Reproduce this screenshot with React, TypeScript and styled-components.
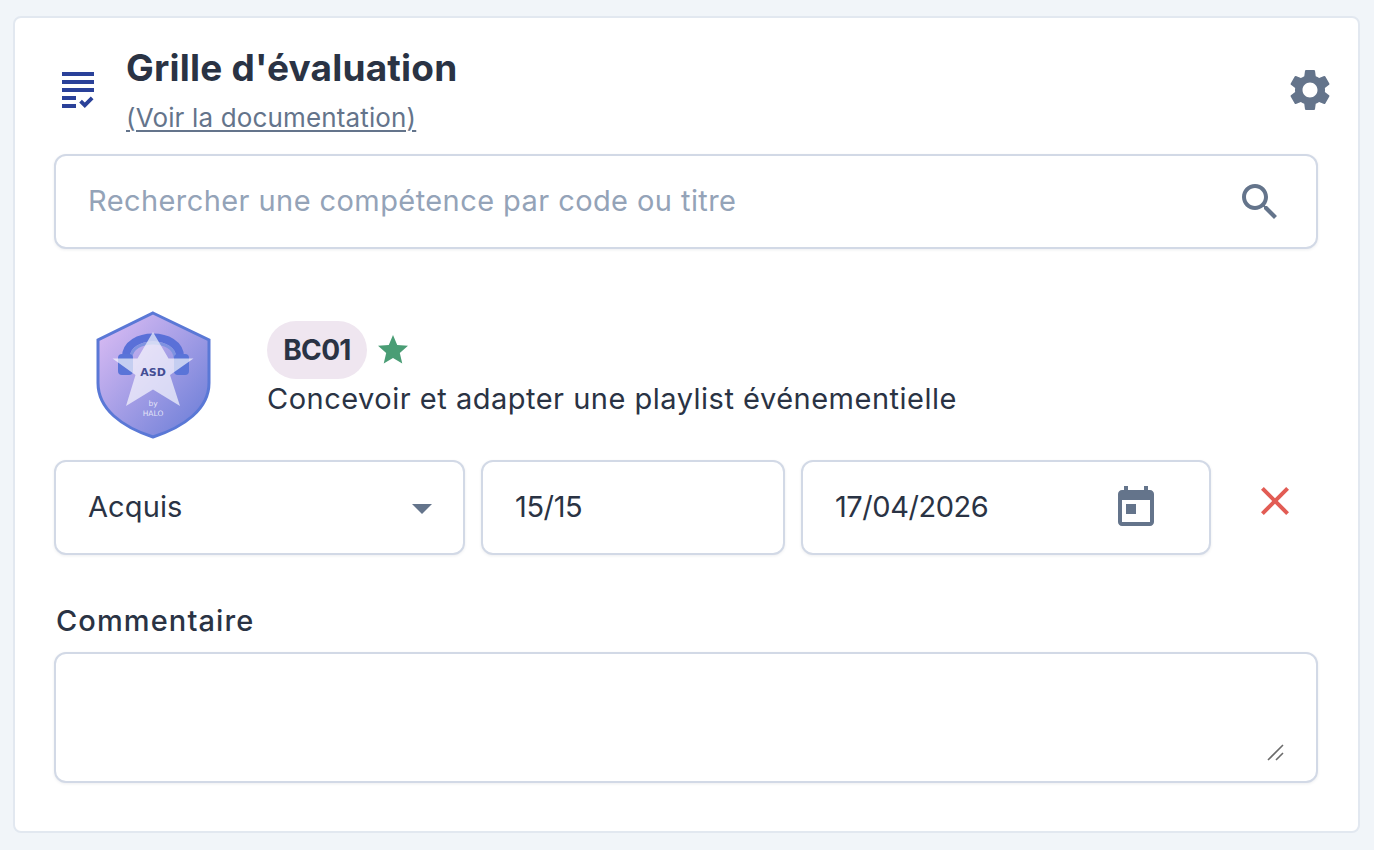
import React from "react";
import styled, { createGlobalStyle } from "styled-components";

const Global = createGlobalStyle`
  html, body { margin: 0; padding: 0; background: #f1f5f9; }
  body { font-family: Inter, "Noto Sans", sans-serif; color: #2a3344; }
  * { box-sizing: border-box; }
`;

const Page = styled.div`
  width: 1374px;
  height: 850px;
  padding: 16px 14px 17px 13px;
  overflow: hidden;
`;

const Card = styled.section`
  height: 817px;
  background: #fff;
  border: 2px solid #e2e8f0;
  border-radius: 8px;
  padding: 0 40px 48px 39px;
`;

const Header = styled.header`
  display: flex;
  align-items: flex-start;
  margin-right: -16px;
  padding: 28px 0 18px 8px;
  height: 136px;
`;

const ListIcon = styled.svg`
  width: 32px;
  height: 36px;
  margin-top: 26px;
  margin-right: 32px;
  flex: none;
`;

const Titles = styled.div`
  flex: 1;
`;

const Title = styled.h1`
  margin: 0;
  font-size: 37px;
  line-height: 44px;
  font-weight: 700;
  letter-spacing: 0.2px;
  color: #2a3344;
`;

const DocLink = styled.a`
  display: inline-block;
  margin-top: 9px;
  font-size: 26px;
  line-height: 38px;
  color: #64748b;
  letter-spacing: 0.15px;
  text-decoration: underline;
  text-underline-offset: 3px;
  text-decoration-thickness: 1.5px;
`;

const GearIcon = styled.svg`
  width: 50px;
  height: 50px;
  margin-top: 19px;
  margin-right: -1px;
  fill: #64748b;
  flex: none;
`;

const fieldStyles = `
  background: #fff;
  border: 2px solid #d2d9e6;
  border-radius: 12px;
  box-shadow: 0 1px 3px rgba(30, 41, 59, 0.08);
`;

const Field = styled.div`
  ${fieldStyles}
  height: 95px;
  display: flex;
  align-items: center;
  padding: 0 32px;
  position: relative;
`;

const FieldInput = styled.input<{ $spacing?: number }>`
  flex: 1;
  min-width: 0;
  border: 0;
  outline: 0;
  padding: 0 0 2px;
  background: transparent;
  font: 400 29px/40px Inter, sans-serif;
  letter-spacing: ${(p) => p.$spacing ?? 0.42}px;
  color: #2a3344;
  &::placeholder {
    color: #94a3b8;
    opacity: 1;
  }
`;

const FieldIcon = styled.svg<{ $right?: number; $top?: number }>`
  width: 48px;
  height: 48px;
  fill: #64748b;
  flex: none;
  margin-right: ${(p) => p.$right ?? 0}px;
  margin-top: ${(p) => p.$top ?? 0}px;
`;

const Skill = styled.div`
  display: flex;
  align-items: flex-start;
  gap: 56px;
  margin-top: 62px;
  padding-left: 42px;
  height: 128px;
`;

const Shield = styled.svg`
  width: 115px;
  height: 128px;
  flex: none;
`;

const SkillText = styled.div`
  padding-top: 10px;
`;

const BadgeLine = styled.div`
  display: flex;
  align-items: center;
  gap: 8px;
`;

const Badge = styled.span`
  height: 58px;
  width: 100px;
  border-radius: 29px;
  background: #efe6f0;
  display: flex;
  align-items: center;
  justify-content: center;
  font-size: 28px;
  font-weight: 700;
  letter-spacing: -0.7px;
  color: #2a3344;
`;

const StarIcon = styled.svg`
  width: 36px;
  height: 36px;
  fill: #4a9d75;
`;

const SkillName = styled.div`
  font-size: 29px;
  line-height: 40px;
  letter-spacing: 0.5px;
`;

const Controls = styled.div`
  display: grid;
  grid-template-columns: 411px 304px 410px 1fr;
  gap: 16px;
  margin-top: 21px;
`;

const DeleteButton = styled.button`
  width: 48px;
  height: 48px;
  margin: 17px 0 0 24px;
  padding: 0;
  border: 0;
  background: none;
  color: #e25c54;
  svg {
    display: block;
    fill: currentColor;
  }
`;

const CommentLabel = styled.label`
  display: block;
  margin: 46px 0 0 2px;
  font-size: 29px;
  line-height: 40px;
  font-weight: 500;
  letter-spacing: 1.1px;
  color: #2a3344;
`;

const TextareaWrap = styled.div`
  position: relative;
  margin-top: 11px;
  height: 131px;
`;

const CommentArea = styled.textarea`
  ${fieldStyles}
  display: block;
  width: 100%;
  height: 100%;
  resize: none;
  outline: 0;
  padding: 24px 32px;
`;

const Grip = styled.svg`
  position: absolute;
  right: 33px;
  bottom: 21px;
  width: 18px;
  height: 18px;
  stroke: #6b6b6b;
  stroke-width: 1.6;
`;

export default function App() {
  return (
    <Page>
      <Global />
      <Card>
        <Header>
          <ListIcon viewBox="0 0 32 36" fill="#2a4199">
            <rect x="0" y="0" width="32" height="4" />
            <rect x="0" y="8" width="32" height="4" />
            <rect x="0" y="16" width="32" height="4" />
            <rect x="0" y="24" width="14" height="4" />
            <rect x="0" y="32" width="14" height="4" />
            <path d="M17.2 30.4l2.7-2.7 2.9 2.9 6-6 2.7 2.7-8.7 8.6z" />
          </ListIcon>
          <Titles>
            <Title>Grille d'évaluation</Title>
            <DocLink>(Voir la documentation)</DocLink>
          </Titles>
          <GearIcon viewBox="0 0 24 24">
            <path d="M19.14 12.94c.04-.3.06-.61.06-.94 0-.32-.02-.64-.07-.94l2.03-1.58c.18-.14.23-.41.12-.61l-1.92-3.32c-.12-.22-.37-.29-.59-.22l-2.39.96c-.5-.38-1.03-.7-1.62-.94l-.36-2.54c-.04-.24-.24-.41-.48-.41h-3.84c-.24 0-.43.17-.47.41l-.36 2.54c-.59.24-1.13.57-1.62.94l-2.39-.96c-.22-.08-.47 0-.59.22L2.74 8.87c-.12.21-.08.47.12.61l2.03 1.58c-.05.3-.09.63-.09.94s.02.64.07.94l-2.03 1.58c-.18.14-.23.41-.12.61l1.92 3.32c.12.22.37.29.59.22l2.39-.96c.5.38 1.03.7 1.62.94l.36 2.54c.05.24.24.41.48.41h3.84c.24 0 .44-.17.47-.41l.36-2.54c.59-.24 1.13-.56 1.62-.94l2.39.96c.22.08.47 0 .59-.22l1.92-3.32c.12-.22.07-.47-.12-.61l-2.01-1.58zM12 15.6c-1.98 0-3.6-1.62-3.6-3.6s1.62-3.6 3.6-3.6 3.6 1.62 3.6 3.6-1.62 3.6-3.6 3.6z" />
          </GearIcon>
        </Header>

        <Field>
          <FieldInput placeholder="Rechercher une compétence par code ou titre" />
          <FieldIcon viewBox="0 0 24 24" $right={0}>
            <path d="M15.5 14h-.79l-.28-.27C15.41 12.59 16 11.11 16 9.5 16 5.91 13.09 3 9.5 3S3 5.91 3 9.5 5.91 16 9.5 16c1.61 0 3.09-.59 4.23-1.57l.27.28v.79l5 4.99L20.49 19l-4.99-5zm-6 0C7.01 14 5 11.99 5 9.5S7.01 5 9.5 5 14 7.01 14 9.5 11.99 14 9.5 14z" />
          </FieldIcon>
        </Field>

        <Skill>
          <Shield viewBox="0 0 115 128">
            <defs>
              <linearGradient id="shieldFill" x1="0" y1="0" x2="1" y2="1">
                <stop offset="0" stopColor="#e0bff5" />
                <stop offset="1" stopColor="#667bd6" />
              </linearGradient>
            </defs>
            <path
              d="M57 2 L113 29 V72 C113 98 88 116 57 126 C26 116 2 98 2 72 V29 Z"
              fill="url(#shieldFill)"
              stroke="#5a78d6"
              strokeWidth="3"
            />
            <path d="M30 46 C30 20 84 20 84 46" fill="none" stroke="#5a70d8" strokeWidth="8" />
            <path d="M35 47 C35 27 79 27 79 47" fill="none" stroke="#7f93e0" strokeWidth="3" />
            <rect x="22" y="43" width="15" height="21" rx="4" fill="#5a74d8" />
            <rect x="78" y="43" width="15" height="21" rx="4" fill="#5a74d8" />
            <path
              d="M57 21 L72.5 47.5 L97.5 47.5 L74 64 L84 95 L57 78.5 L30 95 L39.5 64 L16.5 47.5 L41.5 47.5 Z"
              fill="#fff"
              fillOpacity="0.65"
            />
            <text x="57" y="65" textAnchor="middle" fontFamily="'DejaVu Sans', sans-serif" fontWeight="700" fontSize="11" fill="#444d94">ASD</text>
            <text x="57" y="95" textAnchor="middle" fontFamily="'DejaVu Sans', sans-serif" fontSize="7.5" fill="#fff" fillOpacity="0.75">by</text>
            <text x="57" y="105" textAnchor="middle" fontFamily="'DejaVu Sans', sans-serif" fontSize="7.5" fill="#fff" fillOpacity="0.75">HALO</text>
          </Shield>
          <SkillText>
            <BadgeLine>
              <Badge>BC01</Badge>
              <StarIcon viewBox="0 0 24 24">
                <path d="M12 17.27L18.18 21l-1.64-7.03L22 9.24l-7.19-.61L12 2 9.19 8.63 2 9.24l5.46 4.73L5.82 21z" />
              </StarIcon>
            </BadgeLine>
            <SkillName>Concevoir et adapter une playlist événementielle</SkillName>
          </SkillText>
        </Skill>

        <Controls>
          <Field>
            <FieldInput readOnly value="Acquis" $spacing={0.1} />
            <FieldIcon viewBox="0 0 24 24" $right={-15}>
              <path d="M7 10l5 5 5-5z" />
            </FieldIcon>
          </Field>
          <Field>
            <FieldInput readOnly value="15/15" $spacing={-0.4} />
          </Field>
          <Field>
            <FieldInput readOnly value="17/04/2026" $spacing={-0.45} />
            <FieldIcon viewBox="0 0 24 24" $right={17} $top={1}>
              <path d="M19 3h-1V1h-2v2H8V1H6v2H5c-1.11 0-1.99.9-1.99 2L3 19c0 1.1.89 2 2 2h14c1.1 0 2-.9 2-2V5c0-1.1-.9-2-2-2zm0 16H5V8h14v11zM7 10h5v5H7z" />
            </FieldIcon>
          </Field>
          <DeleteButton aria-label="Supprimer">
            <svg width="48" height="48" viewBox="0 0 24 24">
              <path d="M19 6.41L17.59 5 12 10.59 6.41 5 5 6.41 10.59 12 5 17.59 6.41 19 12 13.41 17.59 19 19 17.59 13.41 12z" />
            </svg>
          </DeleteButton>
        </Controls>

        <CommentLabel>Commentaire</CommentLabel>
        <TextareaWrap>
          <CommentArea />
          <Grip viewBox="0 0 18 18">
            <path d="M1 16L16 1M9 16L16 9" />
          </Grip>
        </TextareaWrap>
      </Card>
    </Page>
  );
}
